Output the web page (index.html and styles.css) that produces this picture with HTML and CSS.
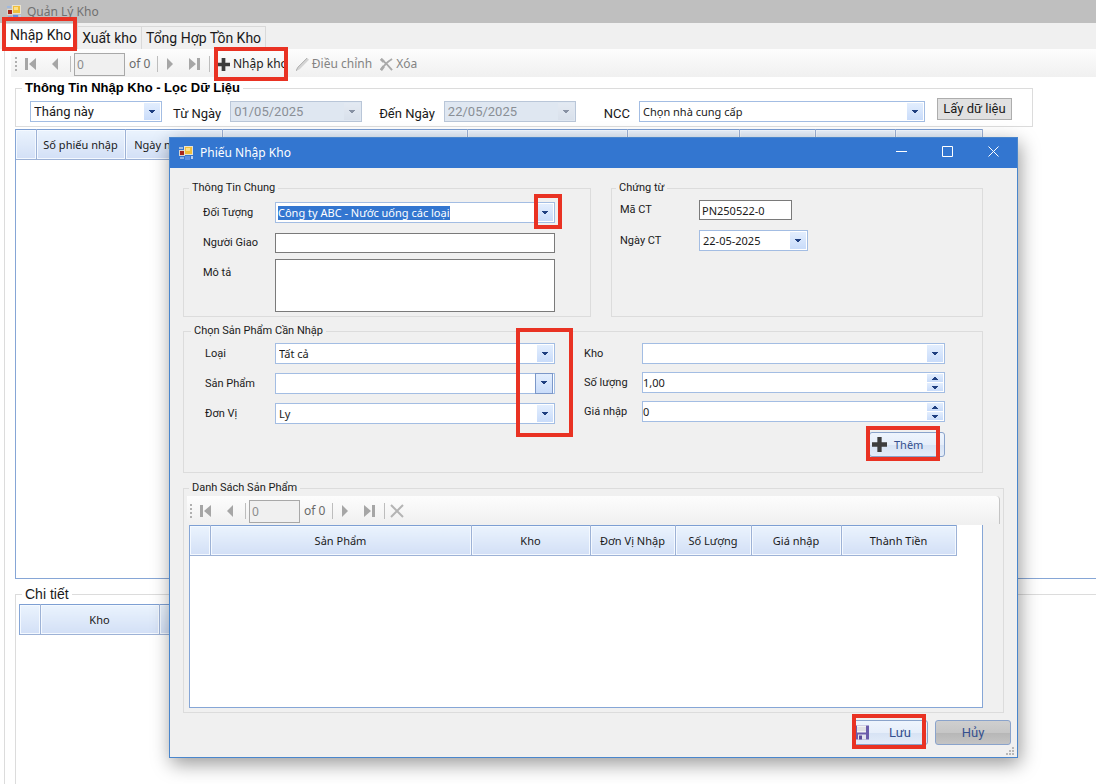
FILE: index.html
```html
<!DOCTYPE html>
<html lang="vi">
<head>
    <meta charset="UTF-8">
    <meta name="viewport" content="width=device-width, initial-scale=1.0">
    <title>Quản Lý Kho</title>
    <link rel="stylesheet" href="styles.css">
</head>
<body>
    <!-- shared icons -->
    <svg class="sprite" aria-hidden="true">
        <symbol id="i-app" viewBox="0 0 14 14">
            <rect x="0" y="4" width="6" height="6" fill="#d9d4cc"/>
            <rect x="1" y="5" width="4" height="4" fill="#a8261c"/>
            <rect x="5" y="0" width="9" height="9" fill="#e9e2cf"/>
            <rect x="6" y="1" width="7" height="7" fill="#f0bf3c"/>
            <rect x="7" y="2" width="4" height="3" fill="#fbe08c"/>
            <rect x="0" y="1" width="4" height="2" fill="#9fb9e0"/>
            <rect x="1" y="11" width="4" height="2" fill="#8fb0e6"/>
            <rect x="6" y="10" width="5" height="4" fill="#5f8fe0"/>
            <rect x="12" y="10" width="2" height="3" fill="#b9cdf0"/>
        </symbol>
        <symbol id="i-first" viewBox="0 0 12 12">
            <path d="M0 0h3v12H0zM11 0v12L4 6z"/>
        </symbol>
        <symbol id="i-prev" viewBox="0 0 12 12">
            <path d="M9 0v12L3 6z"/>
        </symbol>
        <symbol id="i-next" viewBox="0 0 12 12">
            <path d="M3 0v12l6-6z"/>
        </symbol>
        <symbol id="i-last" viewBox="0 0 12 12">
            <path d="M9 0h3v12H9zM1 0v12l7-6z"/>
        </symbol>
        <symbol id="i-plus" viewBox="0 0 14 14">
            <path d="M5 0h4v5h5v4H9v5H5V9H0V5h5z" fill="#3d3d3d"/>
        </symbol>
        <symbol id="i-pencil" viewBox="0 0 14 14">
            <path d="M0 14l2-4L12 0l2 2L4 12z" fill="#d4d4d4"/>
            <path d="M0 14l2-4L12 0" fill="none" stroke="#a8a8a8"/>
        </symbol>
        <symbol id="i-cross" viewBox="0 0 14 14">
            <path d="M1 1c4 3 8 7 12 12M13 1C8 4 4 8 1 13" fill="none" stroke="#aaa" stroke-width="2"/>
            <path d="M1 1l3 3M1 13l3-4" fill="none" stroke="#aaa" stroke-width="3"/>
        </symbol>
        <symbol id="i-delete" viewBox="0 0 14 14">
            <path d="M1 1l12 12M13 1L1 13" fill="none" stroke="#b4b4b4" stroke-width="2"/>
        </symbol>
        <symbol id="i-save" viewBox="0 0 15 14">
            <path d="M0 0h15v14H2l-2-2z" fill="#6c5cab"/>
            <path d="M3 0h9v7H3z" fill="#f2f2f2"/>
            <path d="M3 2h9v1H3zM3 4h9v1H3z" fill="#cfd0d8"/>
            <path d="M4 9h8v5H4z" fill="#e4e4ee"/>
            <path d="M5 10h3v4H5z" fill="#5a4b98"/>
        </symbol>
    </svg>

    <div class="app">
        <header class="app-title">
            <svg class="app-icon"><use href="#i-app"/></svg>
            <h1>Quản Lý Kho</h1>
        </header>

        <nav class="tabs">
            <button class="tab active" type="button">Nhập Kho<span class="mark mark-tab"></span></button>
            <button class="tab" type="button">Xuất kho</button>
            <button class="tab" type="button">Tổng Hợp Tồn Kho</button>
        </nav>

        <main class="page">
            <div class="toolbar">
                <span class="grip"></span>
                <button class="nav-btn" type="button" aria-label="Đầu" disabled><svg><use href="#i-first"/></svg></button>
                <button class="nav-btn" type="button" aria-label="Trước" disabled><svg><use href="#i-prev"/></svg></button>
                <span class="sep"></span>
                <input class="nav-pos" type="text" value="0" aria-label="Vị trí" disabled>
                <span class="nav-count">of 0</span>
                <span class="sep"></span>
                <button class="nav-btn" type="button" aria-label="Sau" disabled><svg><use href="#i-next"/></svg></button>
                <button class="nav-btn" type="button" aria-label="Cuối" disabled><svg><use href="#i-last"/></svg></button>
                <span class="sep"></span>
                <button class="cmd" type="button"><svg><use href="#i-plus"/></svg>Nhập kho<span class="mark mark-cmd"></span></button>
                <button class="cmd" type="button" disabled><svg><use href="#i-pencil"/></svg>Điều chỉnh</button>
                <button class="cmd" type="button" disabled><svg><use href="#i-cross"/></svg>Xóa</button>
            </div>

            <fieldset class="group filter">
                <legend>Thông Tin Nhập Kho - Lọc Dữ Liệu</legend>
                <div class="filter-row">
                    <span class="combo period">
                        <select aria-label="Kỳ"><option>Tháng này</option></select>
                    </span>
                    <label for="from">Từ Ngày</label>
                    <span class="combo date off"><input id="from" type="text" value="01/05/2025" disabled></span>
                    <label class="to-label" for="to">Đến Ngày</label>
                    <span class="combo date off"><input id="to" type="text" value="22/05/2025" disabled></span>
                    <label class="supplier-label" for="supplier">NCC</label>
                    <span class="combo supplier">
                        <select id="supplier"><option>Chọn nhà cung cấp</option></select>
                    </span>
                    <button class="plain-btn" type="button">Lấy dữ liệu</button>
                </div>
            </fieldset>

            <div class="grid master">
                <table>
                    <colgroup>
                        <col class="w20"><col class="w89"><col class="w97"><col class="w245"><col class="w160"><col class="w112"><col class="w76"><col class="w80"><col class="w87">
                    </colgroup>
                    <thead>
                        <tr><th></th><th>Số phiếu nhập</th><th>Ngày nhập kho</th><th></th><th></th><th></th><th></th><th></th><th></th></tr>
                    </thead>
                </table>
            </div>

            <fieldset class="group detail">
                <legend>Chi tiết</legend>
                <div class="grid">
                    <table>
                        <colgroup><col class="w20"><col class="w119"><col class="w119"></colgroup>
                        <thead>
                            <tr><th></th><th>Kho</th><th></th></tr>
                        </thead>
                    </table>
                </div>
            </fieldset>
        </main>
    </div>

    <div class="dialog" role="dialog" aria-labelledby="dialog-title">
        <header class="dialog-title">
            <svg class="app-icon"><use href="#i-app"/></svg>
            <h2 id="dialog-title">Phiếu Nhập Kho</h2>
            <button type="button" aria-label="Thu nhỏ"><svg viewBox="0 0 11 11"><path d="M0 5.5h11"/></svg></button>
            <button type="button" aria-label="Phóng to"><svg viewBox="0 0 11 11"><path d="M.5.5h10v10H.5z"/></svg></button>
            <button type="button" aria-label="Đóng"><svg viewBox="0 0 11 11"><path d="M.5.5l10 10M10.5.5l-10 10"/></svg></button>
        </header>

        <form class="dialog-body">
            <div class="top-groups">
                <fieldset class="group general">
                    <legend>Thông Tin Chung</legend>
                    <div class="form-row">
                        <label for="partner">Đối Tượng</label>
                        <span class="combo">
                            <input class="picked" id="partner" type="text" value="Công ty ABC - Nước uống các loại">
                            <span class="mark mark-arrow"></span>
                        </span>
                    </div>
                    <div class="form-row">
                        <label for="deliver">Người Giao</label>
                        <input class="box" id="deliver" type="text">
                    </div>
                    <div class="form-row note-row">
                        <label for="note">Mô tả</label>
                        <textarea class="box" id="note"></textarea>
                    </div>
                </fieldset>

                <fieldset class="group voucher">
                    <legend>Chứng từ</legend>
                    <div class="form-row">
                        <label for="code">Mã CT</label>
                        <input class="box code" id="code" type="text" value="PN250522-0">
                    </div>
                    <div class="form-row">
                        <label for="vdate">Ngày CT</label>
                        <span class="combo vdate"><input id="vdate" type="text" value="22-05-2025"></span>
                    </div>
                </fieldset>
            </div>

            <fieldset class="group product">
                <legend>Chọn Sản Phẩm Cần Nhập</legend>
                <div class="product-cols">
                    <div class="col-left">
                        <div class="form-row">
                            <label for="kind">Loại</label>
                            <span class="combo"><select id="kind"><option>Tất cả</option></select></span>
                        </div>
                        <div class="form-row">
                            <label for="item">Sản Phẩm</label>
                            <span class="combo hot"><select id="item"><option></option></select></span>
                        </div>
                        <div class="form-row">
                            <label for="unit">Đơn Vị</label>
                            <span class="combo"><select id="unit"><option>Ly</option></select></span>
                        </div>
                        <span class="mark mark-column"></span>
                    </div>
                    <div class="col-right">
                        <div class="form-row">
                            <label for="store">Kho</label>
                            <span class="combo"><select id="store"><option></option></select></span>
                        </div>
                        <div class="form-row">
                            <label for="qty">Số lượng</label>
                            <span class="spin"><input id="qty" type="text" value="1,00"><span class="steps"><button type="button" aria-label="Tăng"></button><button type="button" aria-label="Giảm"></button></span></span>
                        </div>
                        <div class="form-row">
                            <label for="price">Giá nhập</label>
                            <span class="spin"><input id="price" type="text" value="0"><span class="steps"><button type="button" aria-label="Tăng"></button><button type="button" aria-label="Giảm"></button></span></span>
                        </div>
                        <button class="btn add" type="button"><svg><use href="#i-plus"/></svg>Thêm<span class="mark mark-add"></span></button>
                    </div>
                </div>
            </fieldset>

            <fieldset class="group list">
                <legend>Danh Sách Sản Phẩm</legend>
                <div class="toolbar">
                    <span class="grip"></span>
                    <button class="nav-btn" type="button" aria-label="Đầu" disabled><svg><use href="#i-first"/></svg></button>
                    <button class="nav-btn" type="button" aria-label="Trước" disabled><svg><use href="#i-prev"/></svg></button>
                    <span class="sep"></span>
                    <input class="nav-pos" type="text" value="0" aria-label="Vị trí" disabled>
                    <span class="nav-count">of 0</span>
                    <span class="sep"></span>
                    <button class="nav-btn" type="button" aria-label="Sau" disabled><svg><use href="#i-next"/></svg></button>
                    <button class="nav-btn" type="button" aria-label="Cuối" disabled><svg><use href="#i-last"/></svg></button>
                    <span class="sep"></span>
                    <button class="nav-btn" type="button" aria-label="Xóa" disabled><svg class="wide"><use href="#i-delete"/></svg></button>
                </div>
                <div class="grid">
                    <table>
                        <colgroup>
                            <col class="w20"><col class="w261"><col class="w119"><col class="w85"><col class="w76"><col class="w90"><col class="w115">
                        </colgroup>
                        <thead>
                            <tr><th></th><th>Sản Phẩm</th><th>Kho</th><th>Đơn Vị Nhập</th><th>Số Lượng</th><th>Giá nhập</th><th>Thành Tiền</th></tr>
                        </thead>
                    </table>
                </div>
            </fieldset>

            <div class="actions">
                <button class="btn save" type="button"><svg><use href="#i-save"/></svg>Lưu<span class="mark mark-save"></span></button>
                <button class="btn cancel" type="button">Hủy</button>
            </div>
        </form>
        <svg class="resize" viewBox="0 0 9 9"><path d="M6 0h2v2H6zM3 3h2v2H3zM6 3h2v2H6zM0 6h2v2H0zM3 6h2v2H3zM6 6h2v2H6z"/></svg>
    </div>
</body>
</html>
```
FILE: styles.css
```css
* {
    box-sizing: border-box;
}

body {
    margin: 0;
    height: 100vh;
    overflow: hidden;
    position: relative;
    background: #fff;
    color: #1a1a1a;
    font-family: "Noto Sans", "Liberation Sans", sans-serif;
    font-size: 11px;
    line-height: 16px;
}

button, input, select, textarea {
    font: inherit;
    color: inherit;
    margin: 0;
    padding: 0;
    border: 0;
    border-radius: 0;
    background: none;
    outline: none;
}

h1, h2 {
    margin: 0;
    font-size: 12px;
    font-weight: normal;
}

.sprite {
    position: absolute;
    width: 0;
    height: 0;
}

.app-icon {
    width: 14px;
    height: 14px;
}

/* main window */
.app {
    height: 100%;
    display: flex;
    flex-direction: column;
}

.app-title {
    height: 23px;
    display: flex;
    align-items: center;
    gap: 6px;
    padding-left: 7px;
    background: #bfbfbf;
    color: #707070;
}

.tabs {
    height: 26px;
    display: flex;
    align-items: flex-end;
    padding-left: 4px;
    background: #f0f0f0;
    font-family: Roboto, "Liberation Sans", sans-serif;
    font-size: 14px;
}

.tab {
    height: 23px;
    padding: 0 4px;
    border: 1px solid #d9d9d9;
    border-left: 0;
    border-bottom: 0;
    background: #f0f0f0;
}

.tab.active {
    position: relative;
    height: 26px;
    padding: 0 6px 4px;
    background: #fff;
}

.page {
    flex: 1;
    min-height: 0;
    display: flex;
    flex-direction: column;
    margin-left: 4px;
    padding-left: 10px;
    border-left: 1px solid #dcdcdc;
}

.toolbar {
    height: 28px;
    display: flex;
    align-items: center;
    padding-top: 2px;
    background: linear-gradient(#fdfdfd, #f0f0f0);
    font-size: 12px;
}

.page > .toolbar {
    margin-left: -4px;
    padding-left: 4px;
}

.grip {
    width: 2px;
    height: 14px;
    margin-right: 2px;
    background: repeating-linear-gradient(#b0b0b0 0 2px, transparent 2px 4px);
}

.nav-btn {
    width: 24px;
    height: 24px;
    display: grid;
    place-items: center;
}

.nav-btn svg {
    width: 12px;
    height: 12px;
    fill: #a6a6a6;
}

.nav-btn svg.wide {
    width: 14px;
    height: 14px;
}

.sep {
    width: 1px;
    height: 16px;
    margin-left: 3px;
    background: #bdbdbd;
}

.nav-pos {
    width: 51px;
    height: 23px;
    margin-left: 3px;
    padding-left: 2px;
    border: 1px solid #a8a8a8;
    background: #f0f0f0;
    color: #8c8c8c;
}

.nav-count {
    width: 29px;
    padding-left: 4px;
    white-space: nowrap;
    color: #6a6a6a;
}

.cmd {
    position: relative;
    display: flex;
    align-items: center;
    gap: 3px;
    padding: 0 1px 0 7px;
    white-space: nowrap;
}

.cmd svg {
    width: 13px;
    height: 13px;
}

.cmd:disabled {
    color: #838383;
}

.group {
    margin: 0;
    padding: 0;
    min-width: 0;
    border: 1px solid #dcdcdc;
}

.group legend {
    margin-left: 6px;
    padding: 0 3px;
    line-height: 14px;
}

.filter {
    margin: 4px 63px 0 0;
    padding-bottom: 4px;
    font-family: Roboto, "Liberation Sans", sans-serif;
    font-size: 13px;
}

.filter legend {
    font-family: "Liberation Sans", sans-serif;
    font-weight: bold;
    color: #000;
}

.filter-row {
    display: flex;
    align-items: flex-end;
    padding: 3px 20px 0 14px;
}

.filter-row label {
    margin: 5px 9px 0 11px;
    line-height: 17px;
}

.filter-row .to-label {
    margin-left: 17px;
}

.filter-row .supplier-label {
    margin-left: auto;
}

.combo {
    position: relative;
    height: 21px;
    display: flex;
    align-items: center;
    padding: 2px 1px 2px 2px;
    border: 1px solid #a3bde3;
    background: #fff;
}

.combo::after {
    content: "";
    width: 16px;
    height: 17px;
    flex: none;
    margin-left: auto;
}

/* small triangle built from three bars */
.combo::after,
.steps button {
    background:
        linear-gradient(#1f3f80, #1f3f80) 50% 7px / 6px 1px no-repeat,
        linear-gradient(#1f3f80, #1f3f80) 50% 8px / 4px 1px no-repeat,
        linear-gradient(#1f3f80, #1f3f80) 50% 9px / 2px 1px no-repeat,
        linear-gradient(#e3eefe, #c9dcfa);
}

.combo select,
.combo input {
    appearance: none;
    flex: 1;
    min-width: 0;
    height: 17px;
    padding-left: 1px;
}

.combo input.picked {
    flex: none;
    field-sizing: content;
    height: 14px;
    padding: 0;
    background: #3376d0;
    color: #fff;
}

.combo.hot::after {
    height: 19px;
    border: 1px solid #7c98c9;
}

.combo.off {
    border-color: #b9c6d8;
    background: #dfe7f1;
    color: #8a8f96;
}

.combo.off::after {
    filter: grayscale(60%);
    opacity: 0.5;
}

.period {
    width: 132px;
}

.date {
    width: 132px;
}

.supplier {
    width: 286px;
    font-family: "Noto Sans", sans-serif;
    font-size: 11px;
}

.plain-btn {
    width: 75px;
    height: 22px;
    margin: 0 0 2px 12px;
    border: 1px solid #adadad;
    background: #e1e1e1;
}

/* data grids */
.grid {
    overflow: hidden;
    border: 1px solid #86a6d6;
    border-width: 0 0 1px 1px;
    background: #fff;
}

.grid table {
    width: 0;
    table-layout: fixed;
    border-collapse: collapse;
}

.grid th {
    height: 30px;
    padding: 0;
    overflow: hidden;
    border: solid #9db2d6;
    border-width: 1px 1px 1px 0;
    border-top-color: #7d9fd3;
    background: linear-gradient(#eaf3fd, #d2dff6);
    box-shadow: inset 0 0 0 1px #f4f9ff;
    font-weight: normal;
    white-space: nowrap;
}

.w20 { width: 20px; }
.w76 { width: 76px; }
.w80 { width: 80px; }
.w85 { width: 85px; }
.w87 { width: 87px; }
.w89 { width: 89px; }
.w90 { width: 90px; }
.w97 { width: 97px; }
.w112 { width: 112px; }
.w115 { width: 115px; }
.w119 { width: 119px; }
.w160 { width: 160px; }
.w245 { width: 245px; }
.w261 { width: 261px; }

.master {
    flex: 1;
    margin-top: 2px;
}

.detail {
    height: 197px;
    display: flex;
    flex-direction: column;
    margin-top: 8px;
    padding: 3px 0 0 3px;
    border-right: 0;
    border-bottom: 0;
}

.detail legend {
    margin-left: 3px;
    font-family: "Liberation Sans", sans-serif;
    font-size: 14px;
}

.detail .grid {
    flex: 1;
    border-bottom: 0;
}

/* dialog */
.dialog {
    position: absolute;
    left: 169px;
    right: 78px;
    top: 137px;
    border: 1px solid #4a86cc;
    background: #f0f0f0;
    box-shadow: 2px 6px 18px rgba(0, 0, 0, 0.4);
}

.dialog-title {
    height: 30px;
    display: flex;
    align-items: center;
    padding: 0 1px 0 9px;
    background: #3376d0;
    color: #fff;
}

.dialog-title h2 {
    margin: 0 auto 0 7px;
}

.dialog-title button {
    width: 46px;
    height: 30px;
}

.dialog-title button svg {
    width: 11px;
    height: 11px;
    fill: none;
    stroke: #fff;
}

.dialog-body {
    padding: 13px 13px 12px;
}

.dialog-body legend,
.dialog-body label {
    font-family: Roboto, sans-serif;
    font-size: 11px;
}

.top-groups {
    display: grid;
    grid-template-columns: 408fr 372fr;
    gap: 20px;
    margin-right: 21px;
}

.form-row {
    display: grid;
    grid-template-columns: 72px 1fr;
    align-items: center;
}

.general {
    display: grid;
    gap: 10px;
    padding: 7px 35px 4px 19px;
}

.group.general legend,
.group.product legend {
    margin-left: -14px;
}

.note-row {
    align-items: start;
    margin-top: -4px;
}

.note-row label {
    margin-top: 6px;
}

.box {
    width: 100%;
    height: 20px;
    padding: 0 2px;
    border: 1px solid #7a7a7a;
    background: #fff;
}

textarea.box {
    display: block;
    height: 53px;
    resize: none;
}

.voucher {
    padding: 5px 8px 0;
}

.group.voucher legend {
    margin-left: -4px;
}

.voucher .form-row {
    grid-template-columns: 79px 1fr;
    margin-bottom: 10px;
}

.code {
    width: 93px;
}

.vdate {
    width: 109px;
}

.product {
    margin: 7px 21px 0 0;
    padding: 5px 37px 15px 21px;
}

.product-cols {
    display: grid;
    grid-template-columns: 350fr 361fr;
    gap: 29px;
}

.col-left,
.col-right {
    position: relative;
}

.col-left .form-row {
    grid-template-columns: 70px 1fr;
    margin-bottom: 9px;
}

.col-right .form-row {
    grid-template-columns: 58px 1fr;
    margin-bottom: 8px;
}

.spin {
    height: 21px;
    display: flex;
    padding: 1px 1px 1px 0;
    border: 1px solid #a3bde3;
    background: #fff;
}

.spin input {
    flex: 1;
    min-width: 0;
}

.steps {
    width: 16px;
    display: grid;
    gap: 1px;
}

.steps button {
    background-position: 50% 3px, 50% 4px, 50% 5px, 0 0;
}

.steps button:first-child {
    background-position: 50% 5px, 50% 4px, 50% 3px, 0 0;
}

.btn {
    position: relative;
    width: 76px;
    height: 25px;
    display: flex;
    align-items: center;
    justify-content: center;
    border: 1px solid #8aa3cb;
    border-radius: 3px;
    background: linear-gradient(#eef4fd, #e6eefa 50%, #d6e2f4 50%, #e3ecf9);
    color: #35508f;
}

.btn svg {
    width: 15px;
    height: 15px;
}

.add {
    gap: 7px;
    justify-content: flex-start;
    margin: 10px 0 0 auto;
    padding-left: 2px;
}

.list {
    margin-top: 8px;
    padding: 0 3px 4px;
}

.group.list legend {
    margin-left: 2px;
}

.list .toolbar {
    margin-top: 1px;
    padding-left: 3px;
    border-right: 1px solid #c4c4c4;
    border-radius: 0 4px 0 0;
}

.list .grid {
    height: 183px;
    margin: 1px 17px 0 2px;
    border-right-width: 1px;
}

.actions {
    display: flex;
    justify-content: flex-end;
    gap: 7px;
    margin: 7px -7px 0 0;
    font-family: Roboto, "Liberation Sans", sans-serif;
    font-size: 13px;
}

.save {
    gap: 20px;
    justify-content: flex-start;
    padding-left: 1px;
}

.cancel {
    background: linear-gradient(#cfcfcf, #c6c6c6 50%, #b6b6b6 50%, #c4c4c4);
}

.resize {
    position: absolute;
    right: 2px;
    bottom: 1px;
    width: 9px;
    height: 9px;
    fill: #b8b8b8;
}

/* red highlight frames */
.mark {
    position: absolute;
    z-index: 1;
    border: 4px solid #e93223;
    pointer-events: none;
}

.mark-tab {
    inset: -7px 0 -2px -2px;
}

.mark-cmd {
    inset: -9px 1px -9px 4px;
}

.mark-arrow {
    width: 28px;
    height: 35px;
    top: -9px;
    right: -8px;
}

.mark-column {
    width: 57px;
    height: 109px;
    top: -15px;
    right: -18px;
}

.mark-add,
.mark-save {
    width: 74px;
    height: 35px;
    left: -4px;
    top: -7px;
}

.mark-save {
    left: -1px;
}
```
